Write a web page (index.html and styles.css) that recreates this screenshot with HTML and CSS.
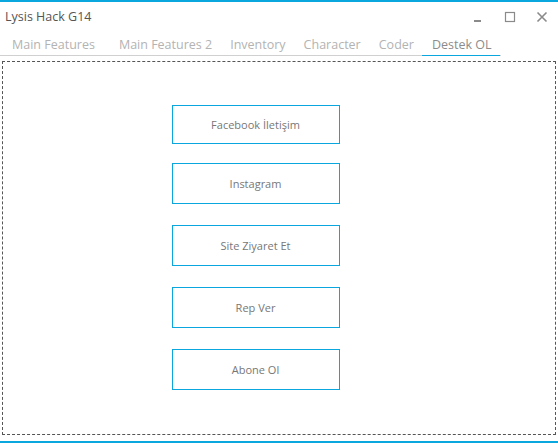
FILE: index.html
```html
<!DOCTYPE html>
<html lang="tr">
<head>
    <meta charset="UTF-8">
    <meta name="viewport" content="width=device-width, initial-scale=1.0">
    <title>Lysis Hack G14</title>
    <link rel="stylesheet" href="styles.css">
</head>
<body>
    <div class="window">
        <div class="titlebar">
            <span class="title">Lysis Hack G14</span>
            <div class="controls">
                <!-- küçült / büyüt / kapat -->
                <svg class="ctl" width="12" height="12" viewBox="0 0 12 12"><rect x="2" y="9" width="7" height="2" fill="#8a8a8a"/></svg>
                <svg class="ctl" width="12" height="12" viewBox="0 0 12 12"><rect x="1.5" y="1.5" width="9" height="9" fill="none" stroke="#8a8a8a" stroke-width="1.2"/></svg>
                <svg class="ctl" width="12" height="12" viewBox="0 0 12 12"><path d="M1.5 1.5 L10.5 10.5 M10.5 1.5 L1.5 10.5" stroke="#8a8a8a" stroke-width="1.6"/></svg>
            </div>
        </div>

        <div class="tabs">
            <span class="tab first">Main Features</span>
            <span class="tab">Main Features 2</span>
            <span class="tab">Inventory</span>
            <span class="tab">Character</span>
            <span class="tab">Coder</span>
            <span class="tab active">Destek OL</span>
        </div>

        <div class="page">
            <div class="buttons">
                <button class="btn">Facebook İletişim</button>
                <button class="btn">Instagram</button>
                <button class="btn">Site Ziyaret Et</button>
                <button class="btn">Rep Ver</button>
                <button class="btn">Abone Ol</button>
            </div>
        </div>
    </div>
</body>
</html>
```

FILE: styles.css
```css
* {box-sizing:border-box;}
body {
    margin:0;
    background:#fff;
    font-family:"Open Sans", "Noto Sans", sans-serif;
}
.window {
    width:558px;
    height:443px;
    border-top:2px solid #0aa6de;
    border-bottom:2px solid #0aa6de;
    display:flex;
    flex-direction:column;
    background:#fff;
}
.titlebar {
    height:28px;
    display:flex;
    align-items:center;
    justify-content:space-between;
    padding:0 0 0 5px;
}
.title {
    font-size:12.5px;
    color:#555;
}
.controls {
    display:flex;
    gap:20px;
    padding-right:10px;
    margin-top:1px;
}
.tabs {
    display:flex;
    width:501px;
    border-bottom:1px solid #d0d0d0;
    padding-left:12px;
    height:26px;
    align-items:flex-end;
    white-space:nowrap;
}
.tab {
    flex-shrink:0;
    font-size:12.5px;
    color:#b3b3b3;
    margin-right:18px;
    padding-bottom:2px;
}
.tab.first {margin-right:24px;}
.tab.active {
    color:#8c8c8c;
    margin-right:0;
    padding:0 8px 2px 10px;
    border-bottom:1px solid #0aa6de;
    margin-bottom:-1px;
    margin-left:-10px;
}
.page {
    flex:1;
    margin:5px 2px 6px 2px;
    border:1px dashed #555;
    display:flex;
    justify-content:center;
    padding-top:43px;
}
.buttons {
    display:flex;
    flex-direction:column;
    gap:21px;
    margin-left:-47px;
}
.btn {
    width:168px;
    height:41px;
    background:#fff;
    border:1px solid #0aa6de;
    font-family:inherit;
    font-size:11px;
    color:#777;
}
.btn:first-child {
    height:39px;
    margin-bottom:-2px;
}
```
